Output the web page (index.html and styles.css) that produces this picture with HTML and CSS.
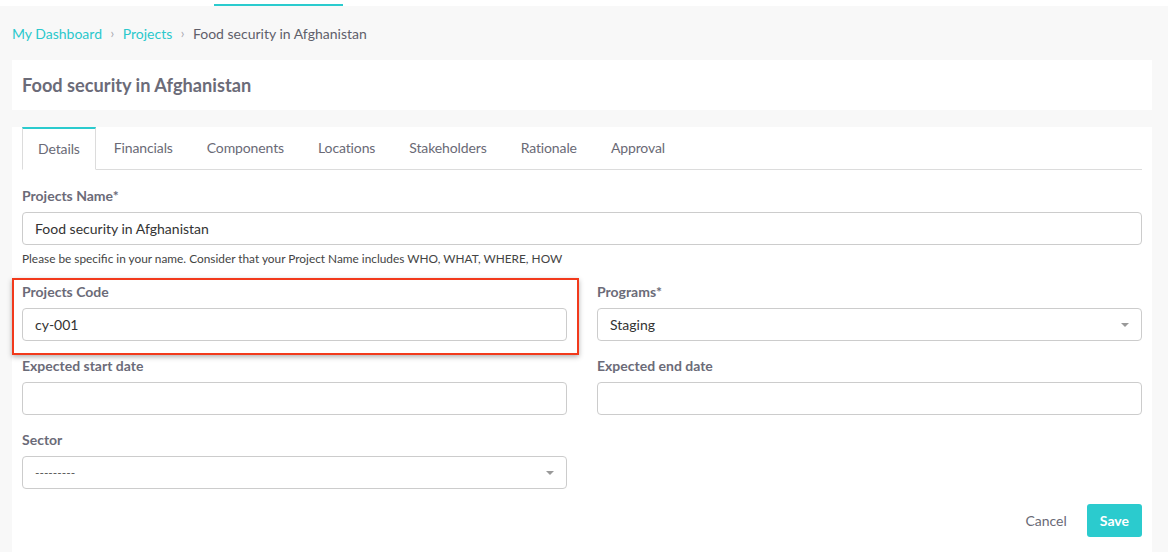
FILE: index.html
```html
<!DOCTYPE html>
<html>
<head>
<meta charset="utf-8">
<link rel="stylesheet" href="styles.css">
</head>
<body>
<div class="topnav"><span class="topnav-active"></span></div>
<div class="page">
  <nav class="crumbs">
    <a class="crumb-link" href="#">My Dashboard</a>
    <span class="crumb-sep">›</span>
    <a class="crumb-link" href="#">Projects</a>
    <span class="crumb-sep">›</span>
    <span class="crumb-current">Food security in Afghanistan</span>
  </nav>
  <div class="title-card">
    <h1 class="title">Food security in Afghanistan</h1>
  </div>
  <div class="main-card">
    <ul class="tabs">
      <li class="tab active">Details</li>
      <li class="tab">Financials</li>
      <li class="tab">Components</li>
      <li class="tab">Locations</li>
      <li class="tab">Stakeholders</li>
      <li class="tab">Rationale</li>
      <li class="tab">Approval</li>
    </ul>
    <form class="form">
      <div class="group first">
        <label class="label">Projects Name*</label>
        <div class="input">Food security in Afghanistan</div>
        <p class="help">Please be specific in your name. Consider that your Project Name includes WHO, WHAT, WHERE, HOW</p>
      </div>
      <div class="row">
        <div class="group highlight">
          <label class="label">Projects Code</label>
          <div class="input">cy-001</div>
        </div>
        <div class="group">
          <label class="label">Programs*</label>
          <div class="input select">Staging<span class="caret"></span></div>
        </div>
      </div>
      <div class="row">
        <div class="group">
          <label class="label">Expected start date</label>
          <div class="input"></div>
        </div>
        <div class="group">
          <label class="label">Expected end date</label>
          <div class="input"></div>
        </div>
      </div>
      <div class="row">
        <div class="group">
          <label class="label">Sector</label>
          <div class="input select small">---------<span class="caret"></span></div>
        </div>
        <div class="group"></div>
      </div>
      <div class="actions">
        <span class="cancel">Cancel</span>
        <span class="save">Save</span>
      </div>
    </form>
  </div>
</div>
</body>
</html>
```
FILE: styles.css
```css
* { box-sizing: border-box; }
html, body { margin: 0; padding: 0; }
body {
  background: #f8f8f8;
  font-family: Lato, "Open Sans", Arial, sans-serif;
  font-size: 14px;
  color: #5f5f6b;
  width: 1168px;
  height: 552px;
  overflow: hidden;
}
.topnav {
  height: 6px;
  background: #fff;
  position: relative;
}
.topnav-active {
  position: absolute;
  left: 214px;
  width: 129px;
  bottom: 0;
  height: 2px;
  background: #2bcbce;
}
.page { padding: 0 16px 0 12px; }
.crumbs {
  height: 54px;
  display: flex;
  align-items: center;
  gap: 7px;
  font-size: 14px;
}
.crumb-link { color: #2bc8cc; text-decoration: none; }
.crumb-sep { color: #a8a8b0; font-size: 13px; padding: 0 1.5px; }
.crumb-current { color: #5f5f6b; }
.title-card {
  background: #fff;
  height: 50px;
  display: flex;
  align-items: center;
  padding: 0 10px;
}
.title {
  margin: 0;
  font-size: 18.2px;
  font-weight: 700;
  color: #6b6b78;
}
.main-card {
  background: #fff;
  margin-top: 17px;
  padding: 0 10px 30px;
}
.tabs {
  list-style: none;
  margin: 0;
  padding: 0;
  display: flex;
  border-bottom: 1px solid #dcdcdc;
  height: 43px;
}
.tab {
  padding: 0 15px 2px;
  margin-right: 2px;
  margin-bottom: -1px;
  border: 1px solid transparent;
  display: flex;
  align-items: center;
  color: #6a6a76;
  font-size: 14px;
  letter-spacing: -0.12px;
}
.tab.active {
  border-color: #dcdcdc;
  border-top: 2px solid #2bcbce;
  border-bottom-color: #fff;
  background: #fff;
  padding-top: 0;
}
.form { padding-top: 17px; }
.row {
  display: grid;
  grid-template-columns: 1fr 1fr;
  column-gap: 30px;
}
.group {
  position: relative;
  margin-bottom: 16px;
}
.group.first { margin-bottom: 17px; }
.label {
  display: block;
  font-weight: 700;
  color: #6b6b78;
  font-size: 14px;
  line-height: 18px;
  margin-bottom: 7px;
}
.input {
  height: 33px;
  border: 1px solid #cccccc;
  border-radius: 4px;
  padding: 0 12px;
  display: flex;
  align-items: center;
  color: #333;
  font-size: 14px;
  position: relative;
}
.input.small { font-size: 12px; color: #555; }
.caret {
  position: absolute;
  right: 12px;
  top: 14px;
  width: 0;
  height: 0;
  border-left: 4px solid transparent;
  border-right: 4px solid transparent;
  border-top: 4px solid #999;
}
.help {
  margin: 6px 0 0;
  font-size: 11.85px;
  color: #444;
  line-height: 15px;
}
.highlight::after {
  content: "";
  position: absolute;
  left: -10px;
  right: -12px;
  top: -5px;
  bottom: -14px;
  border: 2px solid #f23a1c;
  box-shadow: 0 2px 5px rgba(0,0,0,0.3);
  pointer-events: none;
}
.actions {
  display: flex;
  justify-content: flex-end;
  align-items: center;
  gap: 20px;
  margin-top: -1px;
}
.cancel { color: #6a6a76; font-size: 14px; }
.save {
  background: #2bcbce;
  color: #fff;
  font-weight: 700;
  font-size: 14px;
  height: 33px;
  padding: 0 13px;
  border-radius: 3px;
  display: flex;
  align-items: center;
}
```
